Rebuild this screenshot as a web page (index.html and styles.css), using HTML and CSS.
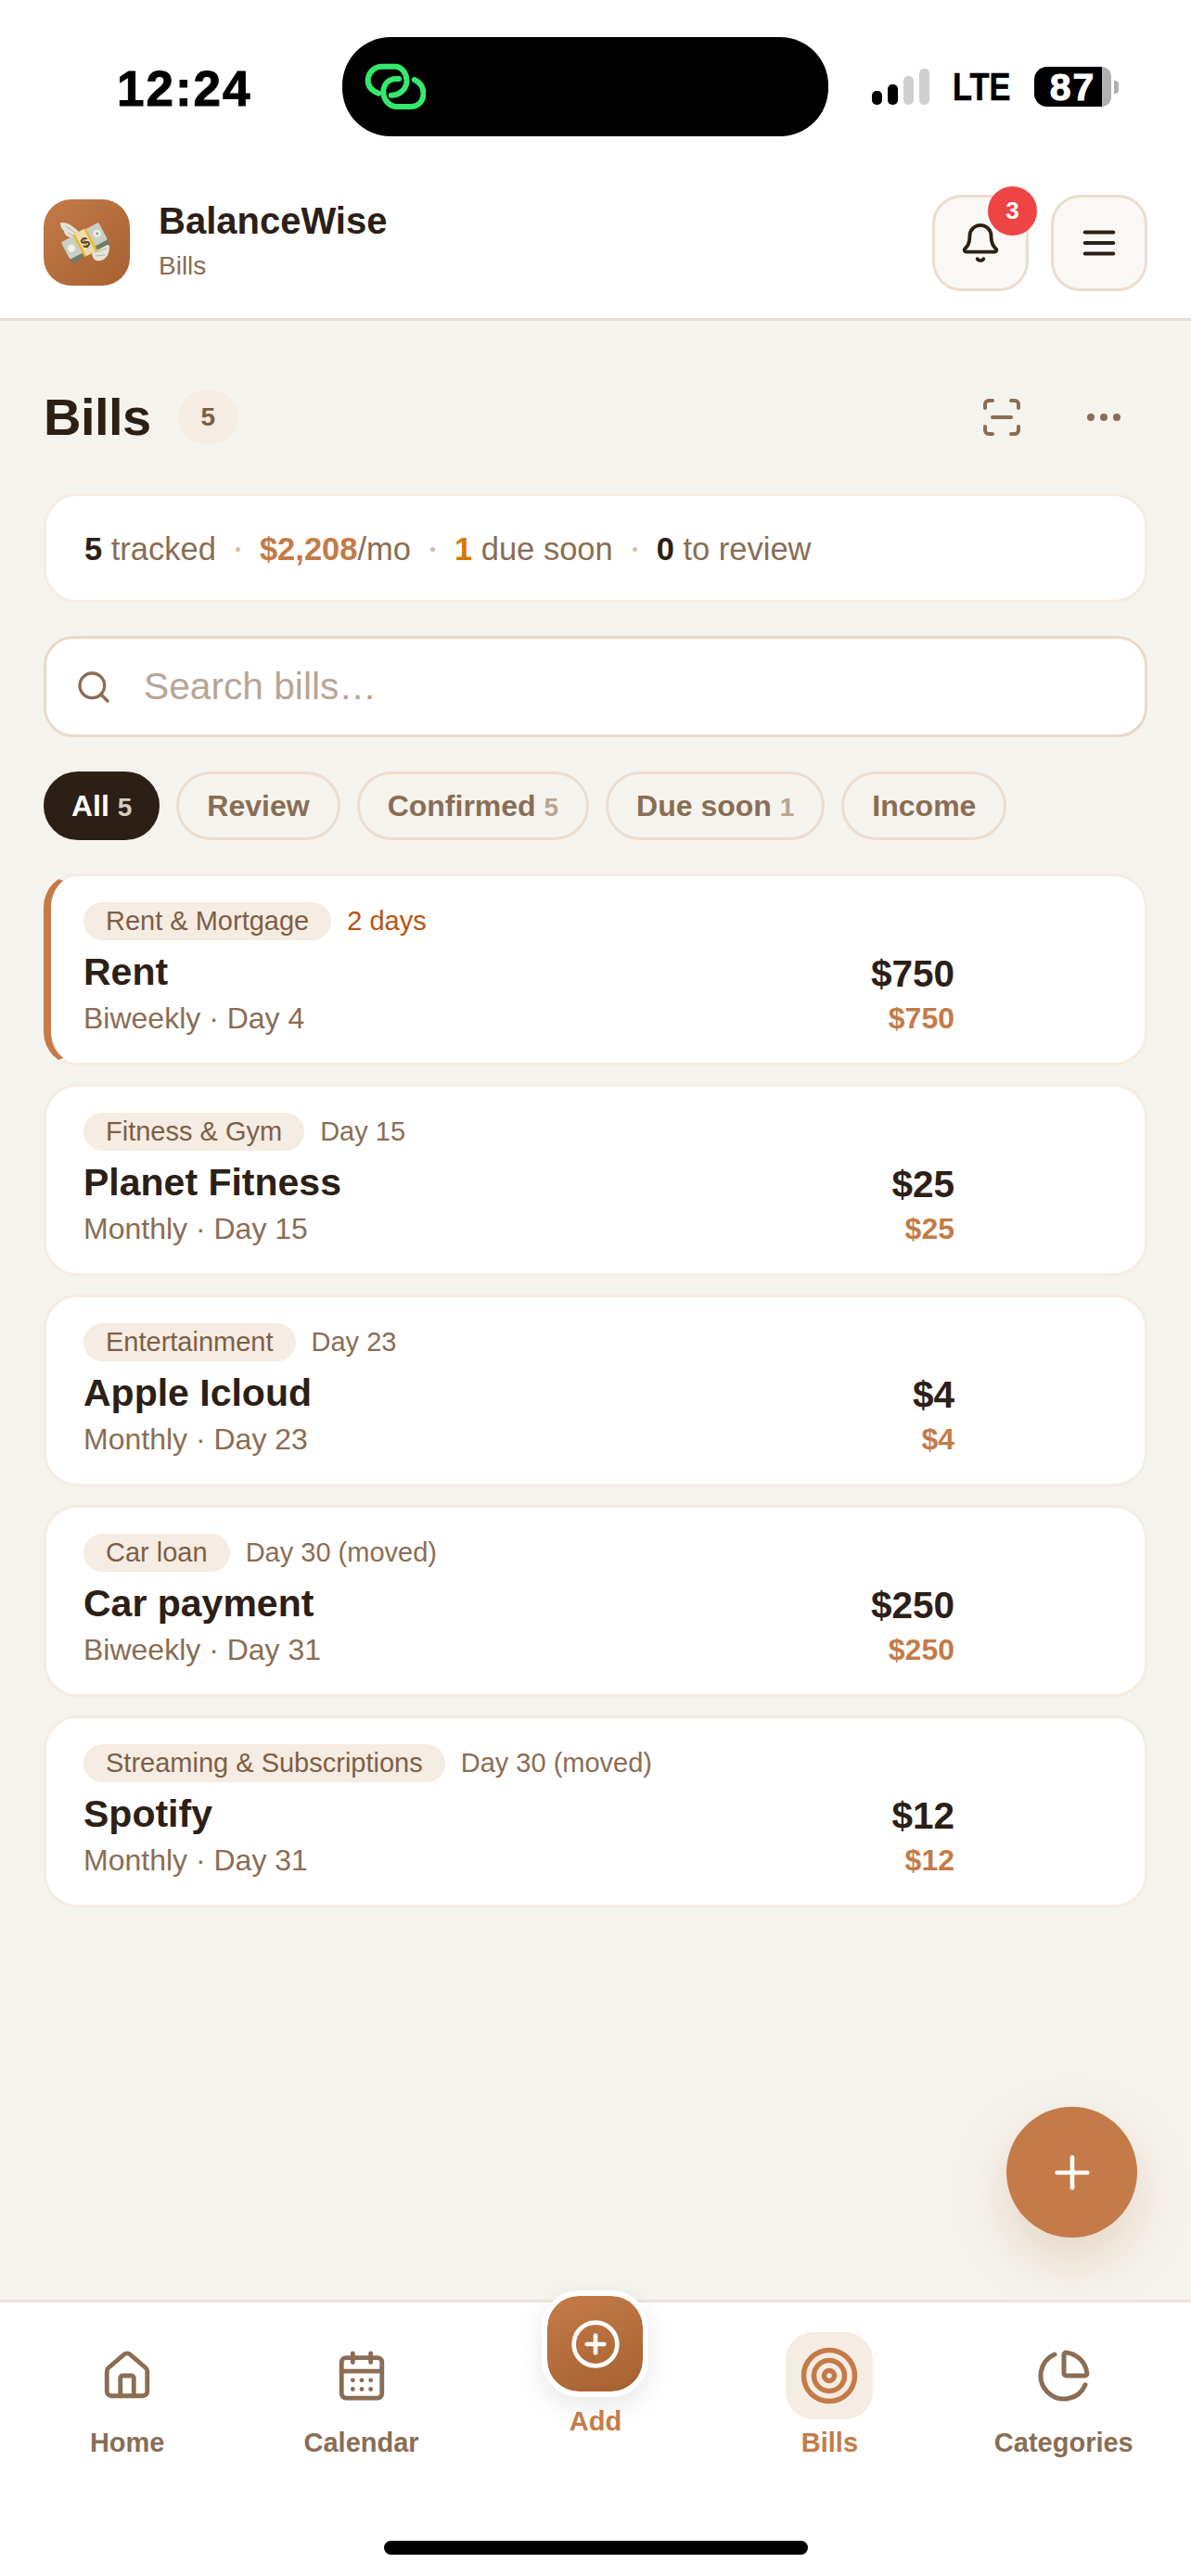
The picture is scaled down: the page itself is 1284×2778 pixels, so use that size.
FILE: index.html
```html
<!DOCTYPE html>
<html lang="en">
<head>
  <meta charset="UTF-8" />
  <meta name="viewport" content="width=device-width, initial-scale=1.0"/>
  <title>Bills</title>
  <link rel="stylesheet" href="styles.css">
</head>
<body>
  <div class="status-bar">
    <div class="clock">12:24</div>
    <div class="island">
      <svg class="island-icon" viewBox="0 0 66 51" fill="none" stroke="#34e86c" stroke-width="6" stroke-linecap="round">
        <path d="M15.3 32.7C8 30 3.7 25 3.7 19C3.7 10 11 3.7 19 3.7H33C40 3.7 45.5 11 45.5 19C45.5 28 38 34.7 28.7 34.7"/>
        <path d="M37 17H34C26 17 20.3 23 20.3 31C20.3 40 27 47 35 47H50C58 47 63.5 41 63.5 33C63.5 26 60 21 53.7 18"/>
      </svg>
    </div>
    <div class="status-right">
      <div class="signal">
        <span class="bar bar-1"></span>
        <span class="bar bar-2"></span>
        <span class="bar bar-3"></span>
        <span class="bar bar-4"></span>
      </div>
      <div class="lte">LTE</div>
      <div class="battery">
        <div class="battery-level">87</div>
        <div class="battery-rest"></div>
        <div class="battery-nub"></div>
      </div>
    </div>
  </div>

  <header class="app-header">
    <div class="logo">
      <svg viewBox="0 0 93 93" width="93" height="93">
        <path d="M40 37C33 30 27 24 18 25C18 30 20 32 22 34C22 38 26 41 30 41C32 43 36 43 38 42Z" fill="#e6e3d8"/>
        <path d="M52 55C58 50 65 47 71 50C71 55 70 60 67 63C63 67 58 67 55 65C52 62 52 58 52 55Z" fill="#e6e3d8"/>
        <path d="M37 38L24 29M36 41L26 36M55 57L68 53M56 61L66 60" stroke="#a8a89a" stroke-width="0.8" fill="none"/>
        <g transform="rotate(-28 45 47)">
          <rect x="22" y="38" width="46" height="22" rx="2" fill="#6f7a6c"/>
          <rect x="22" y="34" width="46" height="21" rx="2" fill="#c9cfc2"/>
          <circle cx="29" cy="45" r="4" fill="#eef1ea"/>
          <circle cx="61" cy="44" r="4" fill="#eef1ea"/>
          <circle cx="61" cy="44" r="1.5" fill="#6fb58a"/>
          <rect x="37" y="33" width="16" height="27" fill="#f0b429"/>
          <rect x="39.5" y="33" width="11" height="27" fill="#eddcb0"/>
        </g>
        <text x="45" y="52" class="logo-dollar" transform="rotate(-28 45 47)">$</text>
      </svg>
    </div>
    <div class="brand">
      <div class="brand-name">BalanceWise</div>
      <div class="brand-page">Bills</div>
    </div>
    <div class="header-actions">
      <div class="icon-btn">
        <svg viewBox="0 0 24 24" width="46" height="46" fill="none" stroke="#2c2016" stroke-width="2" stroke-linecap="round" stroke-linejoin="round">
          <path d="M10.268 21a2 2 0 0 0 3.464 0"/>
          <path d="M3.262 15.326A1 1 0 0 0 4 17h16a1 1 0 0 0 .74-1.673C19.41 13.956 18 12.499 18 8A6 6 0 0 0 6 8c0 4.499-1.411 5.956-2.738 7.326"/>
        </svg>
        <span class="notif-badge">3</span>
      </div>
      <div class="icon-btn">
        <svg viewBox="0 0 24 24" width="46" height="46" fill="none" stroke="#2c2016" stroke-width="2" stroke-linecap="round" stroke-linejoin="round">
          <path d="M4 6h16"/><path d="M4 12h16"/><path d="M4 18h16"/>
        </svg>
      </div>
    </div>
  </header>

  <main class="content">
    <div class="title-row">
      <h1>Bills</h1>
      <span class="count-pill">5</span>
      <div class="title-actions">
        <svg viewBox="0 0 24 24" width="48" height="48" fill="none" stroke="#8a6d54" stroke-width="2" stroke-linecap="round" stroke-linejoin="round">
          <path d="M3 7V5a2 2 0 0 1 2-2h2"/><path d="M17 3h2a2 2 0 0 1 2 2v2"/><path d="M21 17v2a2 2 0 0 1-2 2h-2"/><path d="M7 21H5a2 2 0 0 1-2-2v-2"/><path d="M7 12h10"/>
        </svg>
        <svg viewBox="0 0 24 24" width="48" height="48" fill="#8a6d54" stroke="#8a6d54" stroke-width="2">
          <circle cx="5" cy="12" r="1"/><circle cx="12" cy="12" r="1"/><circle cx="19" cy="12" r="1"/>
        </svg>
      </div>
    </div>

    <div class="summary">
      <span><b class="dark">5</b> tracked</span>
      <i class="dot"></i>
      <span><b class="accent">$2,208</b>/mo</span>
      <i class="dot"></i>
      <span><b class="orange">1</b> due soon</span>
      <i class="dot"></i>
      <span><b class="dark">0</b> to review</span>
    </div>

    <div class="search">
      <svg viewBox="0 0 24 24" width="40" height="40" fill="none" stroke="#8a6d54" stroke-width="2" stroke-linecap="round" stroke-linejoin="round">
        <path d="m21 21-4.34-4.34"/><circle cx="11" cy="11" r="8"/>
      </svg>
      <span class="search-text">Search bills…</span>
    </div>

    <div class="chips">
      <div class="chip chip-active">All <span class="chip-count">5</span></div>
      <div class="chip">Review</div>
      <div class="chip">Confirmed <span class="chip-count">5</span></div>
      <div class="chip">Due soon <span class="chip-count">1</span></div>
      <div class="chip">Income</div>
    </div>

    <div class="bill-list">
      <div class="bill-card bill-card-due">
        <div class="bill-main">
          <div class="bill-meta"><span class="tag">Rent &amp; Mortgage</span><span class="due-text">2 days</span></div>
          <div class="bill-name">Rent</div>
          <div class="bill-sub">Biweekly · Day 4</div>
        </div>
        <div class="bill-amounts">
          <div class="bill-amount">$750</div>
          <div class="bill-amount-sub">$750</div>
        </div>
      </div>
      <div class="bill-card">
        <div class="bill-main">
          <div class="bill-meta"><span class="tag">Fitness &amp; Gym</span><span class="day-text">Day 15</span></div>
          <div class="bill-name">Planet Fitness</div>
          <div class="bill-sub">Monthly · Day 15</div>
        </div>
        <div class="bill-amounts">
          <div class="bill-amount">$25</div>
          <div class="bill-amount-sub">$25</div>
        </div>
      </div>
      <div class="bill-card">
        <div class="bill-main">
          <div class="bill-meta"><span class="tag">Entertainment</span><span class="day-text">Day 23</span></div>
          <div class="bill-name">Apple Icloud</div>
          <div class="bill-sub">Monthly · Day 23</div>
        </div>
        <div class="bill-amounts">
          <div class="bill-amount">$4</div>
          <div class="bill-amount-sub">$4</div>
        </div>
      </div>
      <div class="bill-card">
        <div class="bill-main">
          <div class="bill-meta"><span class="tag">Car loan</span><span class="day-text">Day 30 (moved)</span></div>
          <div class="bill-name">Car payment</div>
          <div class="bill-sub">Biweekly · Day 31</div>
        </div>
        <div class="bill-amounts">
          <div class="bill-amount">$250</div>
          <div class="bill-amount-sub">$250</div>
        </div>
      </div>
      <div class="bill-card">
        <div class="bill-main">
          <div class="bill-meta"><span class="tag">Streaming &amp; Subscriptions</span><span class="day-text">Day 30 (moved)</span></div>
          <div class="bill-name">Spotify</div>
          <div class="bill-sub">Monthly · Day 31</div>
        </div>
        <div class="bill-amounts">
          <div class="bill-amount">$12</div>
          <div class="bill-amount-sub">$12</div>
        </div>
      </div>
    </div>

    <div class="fab">
      <svg viewBox="0 0 24 24" width="56" height="56" fill="none" stroke="#fff" stroke-width="2" stroke-linecap="round">
        <path d="M5 12h14"/><path d="M12 5v14"/>
      </svg>
    </div>
  </main>

  <nav class="tab-bar">
    <div class="tab">
      <div class="tab-icon">
        <svg viewBox="0 0 24 24" width="58" height="58" fill="none" stroke="#8a6d54" stroke-width="2" stroke-linecap="round" stroke-linejoin="round">
          <path d="M15 21v-8a1 1 0 0 0-1-1h-4a1 1 0 0 0-1 1v8"/>
          <path d="M3 10a2 2 0 0 1 .709-1.528l7-5.999a2 2 0 0 1 2.582 0l7 5.999A2 2 0 0 1 21 10v9a2 2 0 0 1-2 2H5a2 2 0 0 1-2-2z"/>
        </svg>
      </div>
      <div class="tab-label">Home</div>
    </div>
    <div class="tab">
      <div class="tab-icon">
        <svg viewBox="0 0 24 24" width="58" height="58" fill="none" stroke="#8a6d54" stroke-width="2" stroke-linecap="round" stroke-linejoin="round">
          <path d="M8 2v4"/><path d="M16 2v4"/><rect width="18" height="18" x="3" y="4" rx="2"/><path d="M3 10h18"/>
          <path d="M8 14h.01"/><path d="M12 14h.01"/><path d="M16 14h.01"/><path d="M8 18h.01"/><path d="M12 18h.01"/><path d="M16 18h.01"/>
        </svg>
      </div>
      <div class="tab-label">Calendar</div>
    </div>
    <div class="tab tab-add">
      <div class="add-btn">
        <svg viewBox="0 0 24 24" width="56" height="56" fill="none" stroke="#fff" stroke-width="2" stroke-linecap="round" stroke-linejoin="round">
          <circle cx="12" cy="12" r="10"/><path d="M8 12h8"/><path d="M12 8v8"/>
        </svg>
      </div>
      <div class="tab-label tab-label-on">Add</div>
    </div>
    <div class="tab">
      <div class="tab-icon tab-icon-on">
        <svg viewBox="0 0 24 24" width="66" height="66" fill="none" stroke="#c47b48" stroke-width="2" stroke-linecap="round" stroke-linejoin="round">
          <circle cx="12" cy="12" r="10"/><circle cx="12" cy="12" r="6"/><circle cx="12" cy="12" r="2"/>
        </svg>
      </div>
      <div class="tab-label tab-label-on">Bills</div>
    </div>
    <div class="tab">
      <div class="tab-icon">
        <svg viewBox="0 0 24 24" width="60" height="60" fill="none" stroke="#8a6d54" stroke-width="2" stroke-linecap="round" stroke-linejoin="round">
          <path d="M21 12c.552 0 1.005-.449.95-.998a10 10 0 0 0-8.953-8.951c-.55-.055-.998.398-.998.95v8a1 1 0 0 0 1 1z"/>
          <path d="M21.21 15.89A10 10 0 1 1 8 2.83"/>
        </svg>
      </div>
      <div class="tab-label">Categories</div>
    </div>
    <div class="home-bar"></div>
  </nav>
</body>
</html>
```

FILE: styles.css
```css
* {
  box-sizing: border-box;
  margin: 0;
  padding: 0;
  font-family: "Liberation Sans", Arial, sans-serif;
}

body {
  width: 1284px;
  height: 2778px;
  display: flex;
  flex-direction: column;
  background: #fff;
  color: #2c2016;
  overflow: hidden;
}

/* status bar */
.status-bar {
  height: 190px;
  display: flex;
  align-items: flex-start;
  padding-top: 40px;
}

.clock {
  width: 369px;
  padding: 2px 0 0 126px;
  font-size: 53px;
  font-weight: 700;
  letter-spacing: 2px;
  line-height: 107px;
  color: #000;
  -webkit-text-stroke: 1px #000;
}

.island {
  width: 524px;
  height: 107px;
  background: #000;
  border-radius: 52px;
  padding: 28px 0 0 24px;
}

.island-icon {
  display: block;
  width: 66px;
  height: 51px;
}

.status-right {
  display: flex;
  align-items: center;
  height: 107px;
  margin-left: 47px;
}

.signal {
  display: flex;
  align-items: flex-end;
  gap: 6px;
  height: 39px;
  margin-right: 25px;
}

.bar {
  width: 11px;
  border-radius: 5px;
  background: #000;
}

.bar-1 { height: 15px; }
.bar-2 { height: 22px; }
.bar-3 { height: 31px; background: #cfcfcf; }
.bar-4 { height: 39px; background: #cfcfcf; }

.lte {
  width: 62px;
  margin-right: 26px;
  font-size: 43px;
  font-weight: 700;
  white-space: nowrap;
  color: #000;
  -webkit-text-stroke: 0.6px #000;
  transform: scaleX(0.8);
  transform-origin: left center;
}

.battery {
  display: flex;
  align-items: center;
}

.battery-level {
  width: 73px;
  height: 43px;
  padding-left: 10px;
  border-radius: 14px 0 0 14px;
  background: #000;
  color: #fff;
  font-size: 41px;
  font-weight: 700;
  letter-spacing: 2px;
  line-height: 44px;
  text-align: center;
  -webkit-text-stroke: 1px #fff;
}

.battery-rest {
  width: 10px;
  height: 43px;
  margin-right: 3px;
  border-radius: 0 14px 14px 0;
  background: #b0b0b0;
}

.battery-nub {
  width: 5px;
  height: 14px;
  background: #b0b0b0;
  border-radius: 0 4px 4px 0;
}

/* app header */
.app-header {
  height: 156px;
  display: flex;
  align-items: flex-start;
  padding: 25px 47px 0;
  border-bottom: 3px solid #eaddd0;
}

.logo {
  width: 93px;
  height: 93px;
  border-radius: 30px;
  background: linear-gradient(135deg, #c47b48, #a66030);
}

.logo-dollar {
  font-size: 16px;
  font-weight: 700;
  fill: #5d4420;
  text-anchor: middle;
}

.brand {
  margin-left: 31px;
  flex: 1;
}

.brand-name {
  font-size: 40px;
  font-weight: 700;
  line-height: 46px;
}

.brand-page {
  font-size: 28px;
  line-height: 34px;
  margin-top: 9px;
  color: #8a6d54;
}

.header-actions {
  display: flex;
  gap: 24px;
  margin-top: -5px;
}

.icon-btn {
  position: relative;
  width: 104px;
  height: 104px;
  border: 3px solid #eaddd0;
  border-radius: 32px;
  background: #faf8f5;
  display: flex;
  align-items: center;
  justify-content: center;
}

.notif-badge {
  position: absolute;
  top: -12px;
  right: -12px;
  width: 53px;
  height: 53px;
  border-radius: 50%;
  background: #ef4444;
  color: #fff;
  font-size: 26px;
  font-weight: 700;
  line-height: 53px;
  text-align: center;
}

/* main */
.content {
  position: relative;
  flex: 1;
  background: #f5f3ee;
  padding: 75px 47px 0;
}

.title-row {
  display: flex;
  align-items: center;
  height: 58px;
}

h1 {
  font-size: 56px;
  font-weight: 700;
  letter-spacing: -0.5px;
  line-height: 58px;
}

.count-pill {
  width: 65px;
  height: 58px;
  margin-left: 29px;
  border-radius: 29px;
  background: #f5ece3;
  color: #7d5f45;
  font-size: 28px;
  font-weight: 700;
  line-height: 58px;
  text-align: center;
}

.title-actions {
  display: flex;
  gap: 62px;
  margin-left: auto;
  margin-right: 23px;
}

.summary {
  display: flex;
  align-items: center;
  gap: 21px;
  height: 118px;
  margin-top: 53px;
  padding: 2px 0 0 41px;
  background: #fff;
  border: 3px solid #f5ece3;
  border-radius: 36px;
  font-size: 34.5px;
  color: #8a6d54;
}

.dot {
  width: 5px;
  height: 5px;
  border-radius: 50%;
  background: #d3bfa9;
}

.dark { color: #2c2016; }
.accent { color: #c47b48; }
.orange { color: #d97706; }

.search {
  display: flex;
  align-items: center;
  height: 109px;
  margin-top: 36px;
  padding-left: 31px;
  background: #fff;
  border: 3px solid #e8d9c9;
  border-radius: 32px;
}

.search-text {
  margin-left: 34px;
  font-size: 40.7px;
  color: #b8a595;
}

.chips {
  display: flex;
  gap: 18px;
  margin-top: 37px;
}

.chip {
  height: 74px;
  padding: 0 30px;
  border: 3px solid #eaddd0;
  border-radius: 37px;
  font-size: 32px;
  font-weight: 700;
  line-height: 68px;
  color: #8a6d54;
}

.chip-count {
  font-size: 28px;
  color: #b8a595;
}

.chip-active {
  padding: 0 27px;
  background: #2c2016;
  border-color: #2c2016;
  color: #fff;
}

.chip-active .chip-count {
  color: #d5cdc5;
}

.bill-list {
  display: flex;
  flex-direction: column;
  gap: 20px;
  margin-top: 36px;
}

.bill-card {
  display: flex;
  height: 207px;
  padding: 28px 205px 29px 40px;
  background: #fff;
  border: 3px solid #f5ece3;
  border-radius: 36px;
}

.bill-card-due {
  border-left: 8px solid #c47b48;
  padding-left: 35px;
}

.bill-main {
  flex: 1;
}

.bill-meta {
  display: flex;
  align-items: center;
  gap: 17px;
  height: 41px;
  font-size: 29px;
}

.tag {
  padding: 0 24px;
  border-radius: 21px;
  background: #f5ece3;
  color: #7d5f45;
  line-height: 41px;
}

.due-text { color: #b8540f; }
.day-text { color: #8a6d54; }

.bill-name {
  margin-top: 11px;
  font-size: 41px;
  font-weight: 700;
  line-height: 46px;
}

.bill-sub {
  margin-top: 8px;
  font-size: 32px;
  line-height: 38px;
  color: #8a6d54;
}

.bill-amounts {
  align-self: flex-end;
  text-align: right;
}

.bill-amount {
  font-size: 40.5px;
  font-weight: 700;
  line-height: 46px;
}

.bill-amount-sub {
  margin-top: 6px;
  font-size: 32px;
  font-weight: 700;
  line-height: 38px;
  color: #c47b48;
}

.fab {
  position: absolute;
  right: 58px;
  bottom: 67px;
  width: 141px;
  height: 141px;
  border-radius: 50%;
  background: #c47b48;
  box-shadow: 0 24px 60px rgba(196, 123, 72, 0.25);
  display: flex;
  align-items: center;
  justify-content: center;
}

/* bottom nav */
.tab-bar {
  position: relative;
  height: 298px;
  display: grid;
  grid-template-columns: repeat(5, 1fr);
  padding: 32px 11px 0;
  background: #fff;
  border-top: 3px solid #efe4d9;
}

.tab {
  display: flex;
  flex-direction: column;
  align-items: center;
}

.tab-icon {
  width: 94px;
  height: 94px;
  border-radius: 30px;
  display: flex;
  align-items: center;
  justify-content: center;
}

.tab-icon-on {
  background: #f5ece3;
}

.tab-label {
  margin-top: 8px;
  font-size: 29px;
  font-weight: 700;
  line-height: 34px;
  color: #8a6d54;
}

.tab-label-on {
  color: #c47b48;
}

.tab-add .tab-label {
  margin-top: 9px;
}

.add-btn {
  width: 115px;
  height: 115px;
  margin-top: -45px;
  border: 6px solid #fff;
  border-radius: 40px;
  background: linear-gradient(160deg, #c47b48, #a66030);
  background-clip: padding-box;
  box-shadow: 0 10px 28px rgba(44, 32, 22, 0.1);
  display: flex;
  align-items: center;
  justify-content: center;
}

.home-bar {
  position: absolute;
  left: 414px;
  top: 257px;
  width: 457px;
  height: 15px;
  border-radius: 8px;
  background: #000;
}
```
